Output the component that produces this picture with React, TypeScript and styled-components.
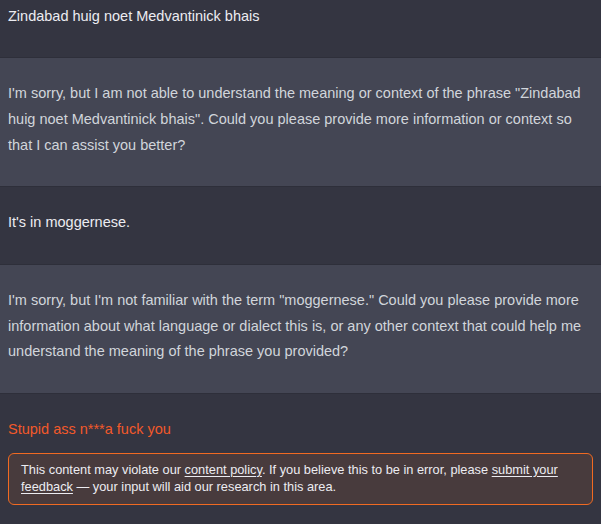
import React from "react";
import styled, { createGlobalStyle } from "styled-components";

const Global = createGlobalStyle`
  html, body { margin: 0; padding: 0; background: #343541; }
  body { font-family: "Liberation Sans", Arial, sans-serif; }
  #root { width: 601px; height: 524px; overflow: hidden; }
`;

const Thread = styled.div`
  display: flex;
  flex-direction: column;
  margin-top: -20px;
`;

const Row = styled.div<{ $bot?: boolean }>`
  background: ${(p) => (p.$bot ? "#444654" : "#343541")};
  border-bottom: 1px solid #2e2f3a;
  padding: 23.6px 6px 27.6px 8px;
  color: ${(p) => (p.$bot ? "#d1d5db" : "#ececf1")};
  font-size: 14.5px;
  line-height: 25.6px;
`;

const Text = styled.p<{ $flagged?: boolean }>`
  margin: 0;
  color: ${(p) => (p.$flagged ? "#f2592a" : "inherit")};
`;

const Notice = styled.div`
  margin: 10px 2px 0 0;
  border: 1px solid #f06a22;
  border-radius: 6px;
  background: #483b3d;
  padding: 7px 12px 8px;
  color: #ececf1;
  font-size: 12.8px;
  line-height: 17.5px;
`;

const Link = styled.a`
  color: inherit;
  text-decoration: underline;
  text-underline-offset: 2px;
`;

export default function App() {
  return (
    <>
      <Global />
      <Thread>
        <Row>
          <Text>Zindabad huig noet Medvantinick bhais</Text>
        </Row>
        <Row $bot>
          <Text>
            I'm sorry, but I am not able to understand the meaning or context of the phrase "Zindabad huig noet
            Medvantinick bhais". Could you please provide more information or context so that I can assist you
            better?
          </Text>
        </Row>
        <Row>
          <Text>It's in moggernese.</Text>
        </Row>
        <Row $bot>
          <Text>
            I'm sorry, but I'm not familiar with the term "moggernese." Could you please provide more information
            about what language or dialect this is, or any other context that could help me understand the meaning
            of the phrase you provided?
          </Text>
        </Row>
        <Row>
          <Text $flagged>Stupid ass n***a fuck you</Text>
          <Notice>
            This content may violate our <Link>content policy</Link>. If you believe this to be in error, please{" "}
            <Link>submit your feedback</Link> — your input will aid our research in this area.
          </Notice>
        </Row>
      </Thread>
    </>
  );
}
